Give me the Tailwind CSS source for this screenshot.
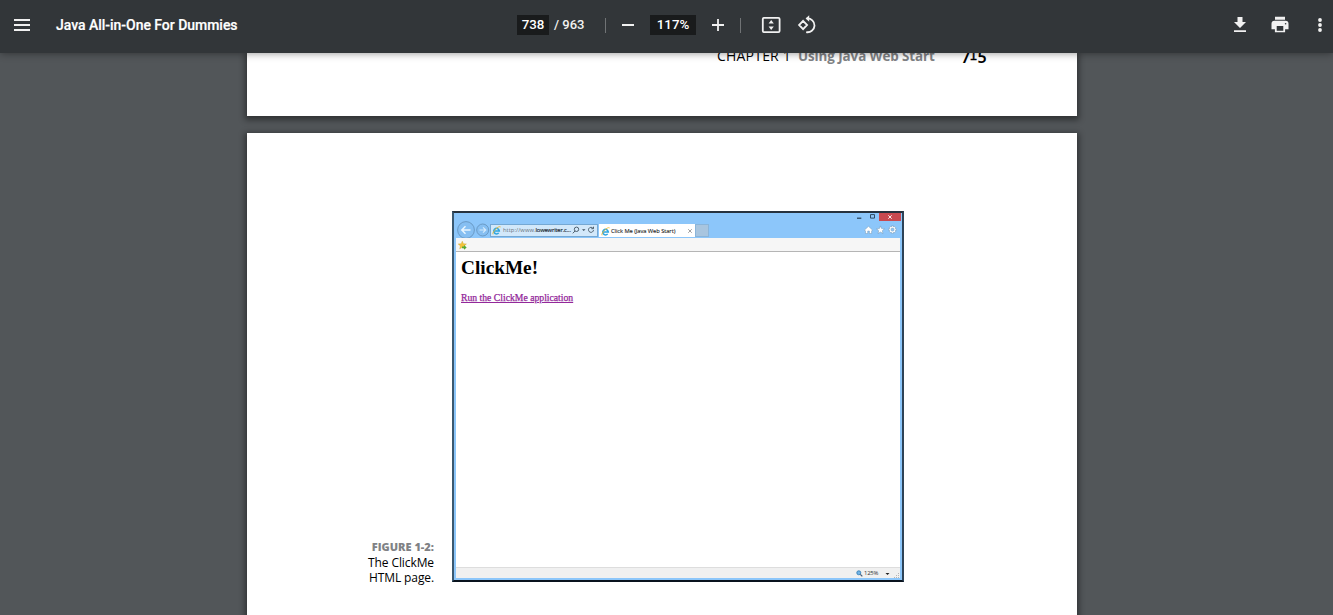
<!DOCTYPE html>
<html lang="en">
<head>
<meta charset="utf-8">
<title>Java All-in-One For Dummies</title>
<script src="https://cdn.jsdelivr.net/npm/@tailwindcss/browser@4"></script>
</head>
<body class="h-[615px] overflow-hidden bg-[#525659] font-['Roboto',sans-serif]">
<div class="flex h-[615px] flex-col overflow-hidden">
  <header class="relative z-10 flex h-[53px] shrink-0 items-center bg-[#323639] pb-[3px] text-[#f1f1f1] shadow-[0_0_8px_rgba(0,0,0,0.45)]">
    <div class="flex w-[517px] items-center pl-[14px]">
      <svg class="h-3 w-4" viewBox="0 0 16 12" fill="#f1f1f1"><path d="M0 0h16v2H0zM0 5h16v2H0zM0 10h16v2H0z"/></svg>
      <h1 class="ml-[26px] text-[14px] leading-5 font-medium whitespace-nowrap tracking-[-0.03px] text-white [-webkit-text-stroke:.2px]">Java All-in-One For Dummies</h1>
    </div>
    <div class="flex w-[715px] items-center text-[13px] leading-5 font-medium">
      <span class="flex h-5 w-8 items-center justify-center bg-[#191b1c] text-[13.3px] text-white">738</span>
      <span class="ml-[5px] w-[51px] whitespace-pre">/ 963</span>
      <span class="h-[15px] w-px bg-[#707375]"></span>
      <svg class="ml-4 h-3 w-3" viewBox="0 0 12 12"><path d="M0 5h12v2H0z" fill="#f1f1f1"/></svg>
      <span class="ml-4 flex h-5 w-[46px] items-center justify-center bg-[#191b1c] text-[13.3px] text-white">117%</span>
      <svg class="ml-4 h-3 w-3" viewBox="0 0 12 12"><path d="M0 5.1h5.1V0h1.800v5.100H12v1.800H6.900V12H5.100V6.900H0z" fill="#f1f1f1"/></svg>
      <span class="ml-4 h-[15px] w-px bg-[#707375]"></span>
      <svg class="ml-5 h-5 w-5" viewBox="0 0 20 20" fill="none"><rect x="1.800" y="2.800" width="16.800" height="14.400" rx="1.200" stroke="#f1f1f1" stroke-width="1.800"/><path d="M10.200 5L12.800 8.500H7.600zM10.200 15L7.600 11.500h5.200z" fill="#f1f1f1"/></svg>
      <svg class="ml-4 h-5 w-5" viewBox="0 0 20 20" fill="none" stroke="#f1f1f1" stroke-width="1.800"><path d="M6.100 5.900L10.100 10l-4 4.100L2.100 10zM9.800 3.500a6.900 6.900 0 1 1-.6 13.600"/><path d="M12.200.2v6.600L8.600 3.500z" fill="#f1f1f1" stroke="none"/></svg>
    </div>
    <div class="flex items-center">
      <svg class="h-4 w-4" viewBox="0 0 16 16" fill="#f1f1f1"><path d="M5.500 0h5v5H14l-6 6-6-6h3.500zM2 13.200h12V15H2z" /></svg>
      <svg class="ml-6 h-4 w-4 overflow-visible" viewBox="0 0 16 16"><path d="M3-.2h10v3H3zM2.500 3.700h11a3 3 0 0 1 3 3v5.600h-3.400v3H2.900v-3H-.5V6.700a3 3 0 0 1 3-3z" fill="#f1f1f1"/><path d="M4.700 9h6.600v4.800H4.700z" fill="#323639"/><circle cx="13.600" cy="6.800" r=".8" fill="#323639"/></svg>
      <svg class="ml-6 h-4 w-4" viewBox="0 0 16 16" fill="#f1f1f1"><circle cx="8" cy="3" r="1.900"/><circle cx="8" cy="8" r="1.900"/><circle cx="8" cy="13" r="1.900"/></svg>
    </div>
  </header>

  <main class="flex flex-col pl-[247px] font-['Open_Sans',sans-serif] text-black">
    <section class="h-[63px] w-[830px] bg-white shadow-[0_2px_6px_2px_rgba(0,0,0,0.42)]">
      <div class="-mt-[7px] flex h-5 items-center pl-[470px] text-[13.4px] whitespace-nowrap">
        <span class="relative -top-px w-[81px] text-[14px] tracking-[.2px]">CHAPTER 1</span>
        <span class="w-[163px] font-bold tracking-[-.08px] text-[#808285]">Using Java Web Start</span>
        <span class="flex items-baseline font-['Noto_Sans',sans-serif] text-[16px] leading-5 font-semibold"><span class="relative top-[2px]">7</span><span class="relative -top-px -ml-px font-['DejaVu_Sans',sans-serif] text-[13px] font-normal [-webkit-text-stroke:.4px]">1</span><span class="relative top-[2px]">5</span></span>
      </div>
    </section>

    <section class="mt-[17px] flex h-[600px] w-[830px] shrink-0 bg-white pt-[78px] shadow-[0_2px_6px_2px_rgba(0,0,0,0.42)]">
      <p class="mr-[18px] w-[187px] pt-[328px] text-right text-[12px] leading-[15.6px] tracking-[-.1px]"><span class="text-[11px] font-extrabold tracking-normal text-[#808285]">FIGURE 1-2:</span><br>The ClickMe<br>HTML page.</p>

      <div class="h-[371px] w-[452px] border-2 border-t-[#26323e] border-r-[#2e4357] border-b-[#09131e] border-l-[#3a5870] bg-[#8cc6fa]">
        <div class="flex h-[25px] justify-between">
          <div class="flex pt-[10px]">
            <svg class="-mt-[2px] ml-[2px] h-[18px] w-[34px] shrink-0" viewBox="0 -1 34 18" fill="none"><circle cx="10" cy="8" r="8.400" fill="#86bff2" stroke="#628fb9" stroke-width=".8"/><path d="M14.500 8H6M9.500 4.300L5.800 8l3.700 3.700" stroke="#e9f6ff" stroke-width="1.500"/><circle cx="26.700" cy="8" r="6" fill="#86bff2" stroke="#628fb9" stroke-width=".8"/><path d="M23.500 8h6M27 5.300L29.800 8 27 10.700" stroke="#d5ebfc" stroke-width="1.100"/></svg>
            <div class="mt-px flex h-[12.500px] w-[108px] items-center border border-[#75a8d3] bg-[#d2e8fa] pl-px text-[5.800px] whitespace-nowrap text-[#68727c]">
              <svg class="mr-[2px] h-[9px] w-[9px] shrink-0" viewBox="0 0 9 9" fill="none"><path d="M2 4.900h5.300a2.800 2.800 0 1 0-.6 2" stroke="#2da5e0" stroke-width="1.500"/><path d="M1 8.300C-.3 6.500 6.500-.8 8.600.9" stroke="#efb92d" stroke-width=".9"/></svg>
              <span class="w-[69px]"><span class="tracking-[.05px]">http://www.</span><span class="tracking-[-.16px] text-[#18242e] [-webkit-text-stroke:.15px]">lowewriter.c...</span></span>
              <svg class="h-[8px] w-[23px] shrink-0" viewBox="0 0 23 8" fill="none" stroke="#3e505f" stroke-width=".9"><circle cx="4.500" cy="3.300" r="2.200"/><path d="M3 5L.8 7.300M20.800 2.100a2.500 2.500 0 1 0 .7 2M21.500.7v2h-2.200"/><path d="M10 3.300h3.500L11.700 5z" fill="#3e505f" stroke="none"/></svg>
            </div>
            <div class="ml-px mt-px flex h-[13px] w-[96px] items-center bg-white pt-px pl-[2px] text-[5.800px] whitespace-nowrap text-[#222]">
              <svg class="mr-px h-[9px] w-[9px] shrink-0" viewBox="0 0 9 9" fill="none"><path d="M2 4.900h5.300a2.800 2.800 0 1 0-.6 2" stroke="#2da5e0" stroke-width="1.500"/><path d="M1 8.300C-.3 6.500 6.500-.8 8.600.9" stroke="#efb92d" stroke-width=".9"/></svg>
              <span class="w-[77px] tracking-[-.08px] [-webkit-text-stroke:.1px]">Click Me (Java Web Start)</span>
              <svg class="h-[4px] w-[4px]" viewBox="0 0 4 4"><path d="M.2.2l3.600 3.600M3.800.2L.2 3.800" stroke="#777" stroke-width=".7"/></svg>
            </div>
            <span class="mt-px h-[13px] w-[14px] border border-[#8ab5da] bg-[#a8c5df]"></span>
          </div>
          <div class="flex w-[52px] flex-col">
            <div class="flex h-[8px]">
              <svg class="h-[8px] w-[29px]" viewBox="0 0 29 8"><path d="M7 4.600h4.300v1.200H7z" fill="#253d54"/><path d="M20.500 1.600h4v3.500h-4z" fill="none" stroke="#253d54" stroke-width=".9"/></svg>
              <div class="flex w-[22px] items-center justify-center bg-[#c94a50]"><svg class="h-[4px] w-[4px]" viewBox="0 0 4 4"><path d="M.3.3l3.400 3.400M3.700.3L.3 3.700" stroke="#fff" stroke-width=".9"/></svg></div>
            </div>
            <svg class="mt-[4px] ml-[13px] h-[10px] w-[34px]" viewBox="0 0 34 10" stroke="#7296b4" stroke-width=".5" fill="#fff"><path d="M1.500 5L5.500 1.300 9.500 5l-.9 1v2.500H6.400V6H4.700v2.500H2.500V6z"/><path d="M17.500.9l1.100 2.700 2.900.2-2.200 1.900.7 2.900-2.500-1.600L15 8.600l.7-2.900-2.200-1.900 2.900-.2z"/><path d="M28.500.9h2v1l1.300-.3.700.7-.3 1.300h1v2h-1l.3 1.300-.7.700-1.300-.3v1h-2v-1l-1.300.3-.7-.7.300-1.300h-1v-2h1l-.3-1.300.7-.7 1.300.3z"/><circle cx="29.500" cy="4.600" r="1.500" fill="#8cc6fa"/></svg>
          </div>
        </div>
        <div class="mx-[2px] flex h-[340px] flex-col bg-white">
          <div class="h-[14px] border-b border-[#b5b5b5] bg-[#f6f6f6] pt-[3px] pl-[2px]">
            <svg class="h-[9px] w-[9px]" viewBox="0 0 9 9"><path d="M4.300.2l1.100 2.500 3 .3-2.200 1.900.7 2.900-2.600-1.500-2.600 1.500.7-2.900L.2 3l3-.3z" fill="#f3c43b" stroke="#cda12b" stroke-width=".4"/><path d="M4 5.400h2V4l2.700 2.400L6 8.700V7.300H4z" fill="#56a936"/></svg>
          </div>
          <div class="h-[315px] shrink-0 pt-[5px] pl-[5px] font-['Liberation_Serif',serif] font-bold">
            <h2 class="text-[19.300px] leading-[22px]">ClickMe!</h2>
            <a class="mt-[13px] block text-[9.700px] leading-3 font-normal text-[#93289a] underline [-webkit-text-stroke:.25px]">Run the ClickMe application</a>
          </div>
          <div class="flex h-[11px] shrink-0 items-center justify-end border-t border-[#ddd] bg-[#f0f0f0] text-[5.900px] text-[#333]">
            <svg class="h-[7px] w-[7px]" viewBox="0 0 7 7" fill="none"><circle cx="2.800" cy="2.800" r="2" fill="#73b4e5" stroke="#347fb9" stroke-width=".9"/><path d="M4.300 4.300l2 2" stroke="#445a75" stroke-width="1.200"/></svg>
            <span class="ml-px w-[21px] tracking-[-.2px]">125%</span>
            <svg class="h-[9px] w-[15px]" viewBox="0 0 15 9"><path d="M.5 4h4L2.500 6z" fill="#222"/><path d="M13 4h1v1h-1zM13 6h1v1h-1zM11 6h1v1h-1zM13 8h1v1h-1zM11 8h1v1h-1zM9 8h1v1H9z" fill="#b5b5b5"/></svg>
          </div>
        </div>
      </div>
    </section>
  </main>
</div>
</body>
</html>
